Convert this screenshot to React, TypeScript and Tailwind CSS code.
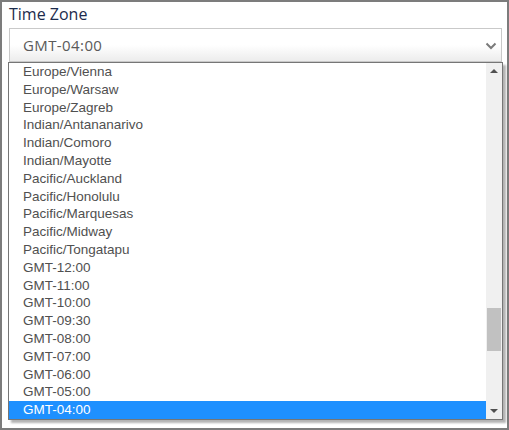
import React from "react";

const zones = [
    "Europe/Vienna",
    "Europe/Warsaw",
    "Europe/Zagreb",
    "Indian/Antananarivo",
    "Indian/Comoro",
    "Indian/Mayotte",
    "Pacific/Auckland",
    "Pacific/Honolulu",
    "Pacific/Marquesas",
    "Pacific/Midway",
    "Pacific/Tongatapu",
    "GMT-12:00",
    "GMT-11:00",
    "GMT-10:00",
    "GMT-09:30",
    "GMT-08:00",
    "GMT-07:00",
    "GMT-06:00",
    "GMT-05:00",
    "GMT-04:00",
];

const selected = "GMT-04:00";

const App: React.FC = () => {
    return (
        <div className="w-[509px] h-[430px] border-2 border-[#7c7c7c] bg-white pl-[7px] pr-[5px] font-['Liberation_Sans',Arial,sans-serif]">
            <div className="h-[26px] pt-[1px] text-[16px] leading-[22px] text-[#1c2b4c] font-['Open_Sans',sans-serif]">
                Time Zone
            </div>

            {/* closed select */}
            <div className="w-[493px] h-[34px] border border-[#c9c9c9] bg-gradient-to-b from-white from-50% to-[#ececec] flex items-center justify-between pl-[13px] pr-[4px]">
                <span className="text-[15px] tracking-[0.4px] text-[#5a5a5a] font-['Open_Sans',sans-serif]">{selected}</span>
                <svg width="12" height="8" viewBox="0 0 12 8" className="mt-[1px]">
                    <path d="M1.5 1.5 L6 6 L10.5 1.5" fill="none" stroke="#7a7a7a" strokeWidth="2" />
                </svg>
            </div>

            {/* open option list */}
            <div className="-ml-px w-[495px] h-[358px] border border-[#767676] bg-white flex shadow-[3px_3px_2px_rgba(0,0,0,0.3)]">
                <div className="flex-1 flex flex-col">
                    {zones.map((zone) => (
                        <div
                            key={zone}
                            className={
                                zone === selected
                                    ? "h-[17.8px] leading-[17.8px] pl-[14px] text-[13.5px] bg-[#1e90ff] text-white"
                                    : "h-[17.8px] leading-[17.8px] pl-[14px] text-[13.5px] text-[#505050]"
                            }
                        >
                            {zone}
                        </div>
                    ))}
                </div>
                <div className="w-[16px] bg-[#f0f0f0] flex flex-col items-center justify-between">
                    <svg width="16" height="16" viewBox="0 0 16 16">
                        <path d="M4 10 L8 6 L12 10 Z" fill="#505050" />
                    </svg>
                    <div className="flex-1 w-full px-[1px] pt-[229px]">
                        <div className="h-[43px] w-[14px] bg-[#c1c1c1]" />
                    </div>
                    <svg width="16" height="16" viewBox="0 0 16 16">
                        <path d="M4 6 L8 10 L12 6 Z" fill="#505050" />
                    </svg>
                </div>
            </div>
        </div>
    );
};

export default App;
